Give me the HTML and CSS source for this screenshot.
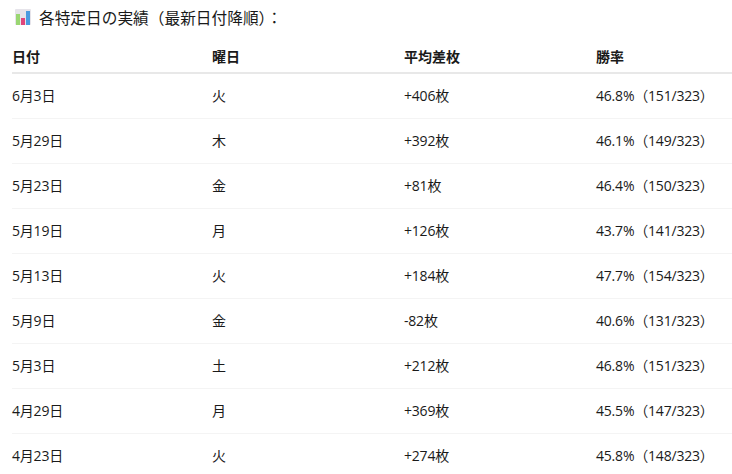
FILE: index.html
```html
<!DOCTYPE html>
<html lang="ja">
<head>
<meta charset="utf-8">
<title>各特定日の実績</title>
<link rel="stylesheet" href="styles.css">
</head>
<body>
<h3 class="heading">
<svg class="chart-icon" width="16" height="16" viewBox="0 0 16 16" aria-hidden="true">
<rect x="0" y="0" width="16" height="16" rx="1" fill="#e6e4ea"/>
<rect x="1" y="5" width="4" height="11" fill="#9ad672"/>
<rect x="6" y="9" width="4" height="7" fill="#e0457b"/>
<rect x="11" y="2" width="4" height="14" fill="#4a9be0"/>
</svg>
<span>各特定日の実績（最新日付降順）：</span>
</h3>
<table class="results">
<thead>
<tr><th class="col-date">日付</th><th class="col-day">曜日</th><th class="col-diff">平均差枚</th><th>勝率</th></tr>
</thead>
<tbody>
<tr><td>6月3日</td><td>火</td><td>+406枚</td><td>46.8%（151/323）</td></tr>
<tr><td>5月29日</td><td>木</td><td>+392枚</td><td>46.1%（149/323）</td></tr>
<tr><td>5月23日</td><td>金</td><td>+81枚</td><td>46.4%（150/323）</td></tr>
<tr><td>5月19日</td><td>月</td><td>+126枚</td><td>43.7%（141/323）</td></tr>
<tr><td>5月13日</td><td>火</td><td>+184枚</td><td>47.7%（154/323）</td></tr>
<tr><td>5月9日</td><td>金</td><td>-82枚</td><td>40.6%（131/323）</td></tr>
<tr><td>5月3日</td><td>土</td><td>+212枚</td><td>46.8%（151/323）</td></tr>
<tr><td>4月29日</td><td>月</td><td>+369枚</td><td>45.5%（147/323）</td></tr>
<tr><td>4月23日</td><td>火</td><td>+274枚</td><td>45.8%（148/323）</td></tr>
</tbody>
</table>
</body>
</html>
```
FILE: styles.css
```css
html, body { margin: 0; padding: 0; background: #fff; overflow: hidden; height: 474px; }
body { font-family: "Open Sans", "Noto Sans CJK JP", sans-serif; color: #1a1a1a; font-size: 14px; padding-left: 12px; }
.heading { display: flex; align-items: center; gap: 8px; margin: 0; padding: 7px 0 0 3px; height: 20px; font-size: 15.7px; font-weight: 400; font-family: "Noto Sans CJK JP", sans-serif; }
.chart-icon { flex: none; }
.results { border-collapse: collapse; table-layout: fixed; width: 720px; margin-top: 15px; }
.col-date { width: 200px; }
.col-day, .col-diff { width: 192px; }
th { text-align: left; font-weight: 700; height: 27px; padding: 0 0 3px; border-bottom: 2px solid #e8e8e8; font-size: 14px; font-family: "Noto Sans CJK JP", sans-serif; }
td { height: 42px; padding: 0 0 2px; border-bottom: 1px solid #f4f4f4; font-size: 14px; letter-spacing: -0.2px; }
```
